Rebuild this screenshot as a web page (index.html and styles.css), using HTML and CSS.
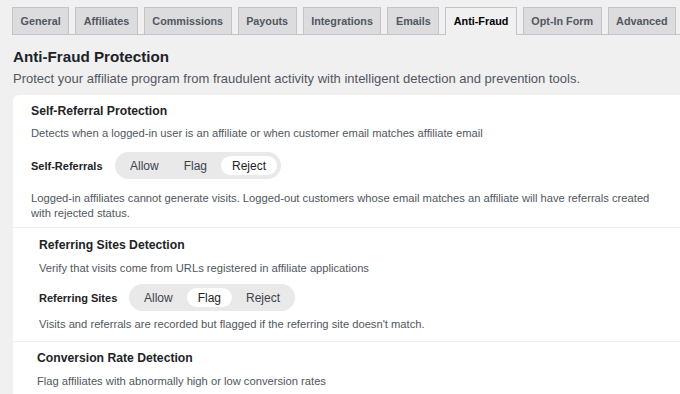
FILE: index.html
```html
<!DOCTYPE html>
<html lang="en">
<head>
    <meta charset="UTF-8">
    <meta name="viewport" content="width=device-width, initial-scale=1.0">
    <title>Anti-Fraud Settings</title>
    <link rel="stylesheet" href="styles.css">
</head>
<body>
    <!-- Settings tabs -->
    <nav class="nav-tabs">
        <a class="nav-tab">General</a>
        <a class="nav-tab">Affiliates</a>
        <a class="nav-tab">Commissions</a>
        <a class="nav-tab">Payouts</a>
        <a class="nav-tab">Integrations</a>
        <a class="nav-tab">Emails</a>
        <a class="nav-tab active">Anti-Fraud</a>
        <a class="nav-tab">Opt-In Form</a>
        <a class="nav-tab">Advanced</a>
    </nav>

    <h1 class="page-title">Anti-Fraud Protection</h1>
    <p class="page-desc">Protect your affiliate program from fraudulent activity with intelligent detection and prevention tools.</p>

    <div class="card">
        <div class="section section-self">
            <h2>Self-Referral Protection</h2>
            <p class="desc">Detects when a logged-in user is an affiliate or when customer email matches affiliate email</p>
            <div class="setting-row">
                <span class="setting-label">Self-Referrals</span>
                <div class="segmented">
                    <button>Allow</button>
                    <button>Flag</button>
                    <button class="active">Reject</button>
                </div>
            </div>
            <p class="desc note">Logged-in affiliates cannot generate visits. Logged-out customers whose email matches an affiliate will have referrals created with rejected status.</p>
        </div>

        <div class="section section-sites">
            <h2>Referring Sites Detection</h2>
            <p class="desc">Verify that visits come from URLs registered in affiliate applications</p>
            <div class="setting-row">
                <span class="setting-label">Referring Sites</span>
                <div class="segmented">
                    <button>Allow</button>
                    <button class="active">Flag</button>
                    <button>Reject</button>
                </div>
            </div>
            <p class="desc note">Visits and referrals are recorded but flagged if the referring site doesn't match.</p>
        </div>

        <div class="section section-rate">
            <h2>Conversion Rate Detection</h2>
            <p class="desc">Flag affiliates with abnormally high or low conversion rates</p>
        </div>
    </div>
</body>
</html>
```

FILE: styles.css
```css
body {
    margin: 0;
    padding: 7px 0 0 13px;
    background-color: #f0f0f1;
    color: #1d2327;
    font-family: "Liberation Sans", Arial, sans-serif;
    overflow: hidden;
}
/* Tabs */
.nav-tabs {
    display: flex;
    gap: 6px;
    border-bottom: 1px solid #c3c4c7;
    margin-left: -1px;
}
.nav-tab {
    display: block;
    flex-shrink: 0;
    white-space: nowrap;
    padding: 0 7.5px;
    height: 26px;
    line-height: 27px;
    font-size: 10.8px;
    font-weight: 700;
    color: #50575e;
    background-color: #dcdcde;
    border: 1px solid #c3c4c7;
    border-bottom: none;
}
.nav-tab.active {
    background-color: #f0f0f1;
    color: #000;
    margin-bottom: -1px;
    height: 27px;
}
.page-title {
    font-size: 15.2px;
    font-weight: 700;
    margin: 12px 0 0;
    line-height: 20px;
}
.page-desc {
    font-size: 13px;
    color: #50575e;
    margin: 3px 0 0;
    line-height: 18px;
}
/* Card */
.card {
    background-color: #fff;
    margin-top: 7px;
    border-radius: 6px 0 0 0;
}
.section {
    border-bottom: 1px solid #f0f0f1;
    padding: 8px 20px 6px 18px;
}
.section-sites {
    padding: 9px 20px 9px 26px;
}
.section-rate {
    padding: 8px 20px 9px 24px;
    border-bottom: none;
}
.section h2 {
    font-size: 12.2px;
    font-weight: 700;
    margin: 0;
    line-height: 16px;
}
.desc {
    font-size: 11.2px;
    color: #50575e;
    margin: 7px 0 0;
    line-height: 15px;
}
.section-sites .desc,
.section-rate .desc {
    margin-top: 8px;
}
.section-self .desc.note {
    margin-top: 12px;
}
.section-sites .desc.note {
    margin-top: 6px;
}
.setting-row {
    display: flex;
    align-items: center;
    margin-top: 11px;
}
.section-sites .setting-row {
    margin-top: 8px;
}
.setting-label {
    font-size: 11px;
    font-weight: 700;
    width: 84px;
}
.section-sites .setting-label {
    width: 90px;
}
/* Allow / Flag / Reject switch */
.segmented {
    display: flex;
    gap: 3px;
    background-color: #e9e9ea;
    border-radius: 14px;
    padding: 4px;
    height: 19px;
}
.segmented button {
    font-family: inherit;
    font-size: 12px;
    color: #3c434a;
    background: none;
    border: none;
    padding: 0 11px;
    border-radius: 10px;
}
.segmented button.active {
    background-color: #fff;
    color: #1d2327;
}
```
